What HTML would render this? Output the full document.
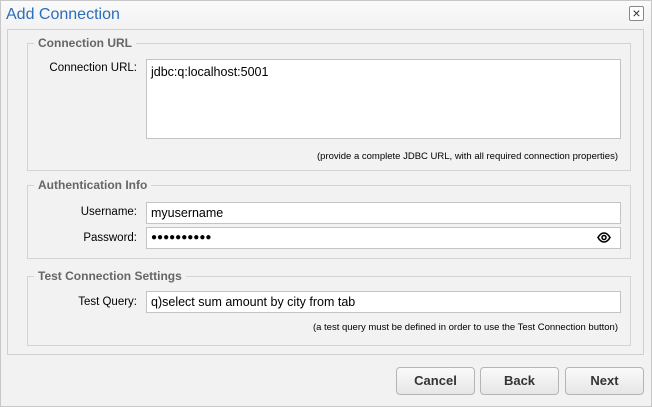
<!DOCTYPE html>
<html><head><style>
*{box-sizing:border-box}
html,body{margin:0;padding:0}
body{width:652px;height:407px;background:#f2f2f2;font-family:"Liberation Sans",Arial,sans-serif;font-size:12px;color:#000;position:relative;overflow:hidden}
.frame{position:absolute;left:0;top:0;width:652px;height:407px;border:1px solid #c8c8c8}
.hdr{position:absolute;left:1px;top:1px;width:650px;height:28px;background:linear-gradient(#fafafa,#f2f2f2)}
.title{position:absolute;left:6px;top:6px;font-size:16px;color:#2a6ebb}
.close{position:absolute;left:629px;top:6px;width:15px;height:15px;border:1px solid #888;border-radius:2px;background:#fff;font-size:14px;line-height:12px;text-align:center;color:#333}
.panel{position:absolute;left:7px;top:29px;width:637px;height:326px;border:1px solid #d0d0d0;background:#f2f2f2}
.fs{position:absolute;left:27px;width:604px;border:1px solid #d3d3d3}
.lg{position:absolute;left:6px;top:-8px;background:#f2f2f2;padding:0 4px;font-weight:bold;color:#666;font-size:12px}
.lbl{position:absolute;text-align:right;width:110px;font-size:11.5px;color:#000}
.inp{position:absolute;left:146px;width:475px;border:1px solid #c4c4c4;background:#fff;padding:3px 4px;font-size:12.5px}
.note{position:absolute;font-size:9.5px;color:#000}
.btn{position:absolute;top:367px;height:28px;width:79px;border:1px solid #b5b5b5;border-radius:4px;background:linear-gradient(#fafafa,#e6e6e6);font-weight:bold;color:#333;font-size:13px;text-align:center;line-height:26px}
</style></head><body>
<div class="frame"></div>
<div class="hdr"></div>
<div class="title">Add Connection</div>
<div class="close">×</div>
<div class="panel"></div>
<div class="fs" style="top:43px;height:128px"><div class="lg">Connection URL</div></div>
<div class="lbl" style="left:27px;top:62px">Connection URL:</div>
<div class="inp" style="top:59px;height:80px;padding-top:5px">jdbc:q:localhost:5001</div>
<div class="note" style="top:151px;right:34px">(provide a complete JDBC URL, with all required connection properties)</div>

<div class="fs" style="top:185px;height:74px"><div class="lg">Authentication Info</div></div>
<div class="lbl" style="left:27px;top:206px">Username:</div>
<div class="inp" style="top:202px;height:22px">myusername</div>
<div class="lbl" style="left:27px;top:232px">Password:</div>
<div class="inp" style="top:227px;height:22px;font-size:10px;line-height:14px">●●●●●●●●●●</div>
<svg style="position:absolute;left:597px;top:232px" width="14" height="11" viewBox="0 0 14 11"><path d="M1 5.5C3 2 5 1 7 1s4 1 6 4.5C11 9 9 10 7 10S3 9 1 5.5z" fill="none" stroke="#000" stroke-width="1.6"/><circle cx="7" cy="5.5" r="2" fill="none" stroke="#000" stroke-width="1.5"/></svg>

<div class="fs" style="top:276px;height:70px"><div class="lg">Test Connection Settings</div></div>
<div class="lbl" style="left:27px;top:296px">Test Query:</div>
<div class="inp" style="top:291px;height:22px">q)select sum amount by city from tab</div>
<div class="note" style="top:322px;right:34px">(a test query must be defined in order to use the Test Connection button)</div>

<div class="btn" style="left:396px">Cancel</div>
<div class="btn" style="left:480px">Back</div>
<div class="btn" style="left:565px">Next</div>
</body></html>
